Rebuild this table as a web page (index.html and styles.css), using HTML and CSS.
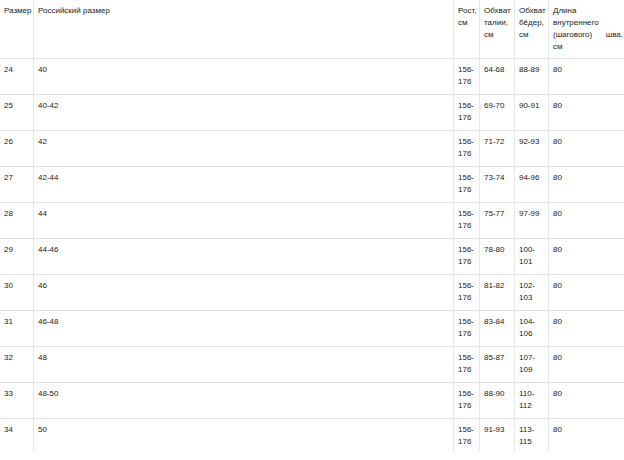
FILE: index.html
```html
<!DOCTYPE html>
<html lang="ru">
<head>
<meta charset="utf-8">
<title>Таблица размеров</title>
<link rel="stylesheet" href="styles.css">
</head>
<body>
<div class="frame">
<table class="sizes">
  <thead>
    <tr>
      <th class="c1">Размер</th>
      <th class="c2">Российский размер</th>
      <th class="c3">Рост, см</th>
      <th class="c4">Обхват талии, см</th>
      <th class="c5">Обхват бёдер, см</th>
      <th class="c6">Длина внутреннего (шагового) шва, см</th>
    </tr>
  </thead>
  <tbody>
    <tr><td>24</td><td>40</td><td>156-176</td><td>64-68</td><td>88-89</td><td>80</td></tr>
    <tr><td>25</td><td>40-42</td><td>156-176</td><td>69-70</td><td>90-91</td><td>80</td></tr>
    <tr><td>26</td><td>42</td><td>156-176</td><td>71-72</td><td>92-93</td><td>80</td></tr>
    <tr><td>27</td><td>42-44</td><td>156-176</td><td>73-74</td><td>94-96</td><td>80</td></tr>
    <tr><td>28</td><td>44</td><td>156-176</td><td>75-77</td><td>97-99</td><td>80</td></tr>
    <tr><td>29</td><td>44-46</td><td>156-176</td><td>78-80</td><td>100-101</td><td>80</td></tr>
    <tr><td>30</td><td>46</td><td>156-176</td><td>81-82</td><td>102-103</td><td>80</td></tr>
    <tr><td>31</td><td>46-48</td><td>156-176</td><td>83-84</td><td>104-106</td><td>80</td></tr>
    <tr><td>32</td><td>48</td><td>156-176</td><td>85-87</td><td>107-109</td><td>80</td></tr>
    <tr><td>33</td><td>48-50</td><td>156-176</td><td>88-90</td><td>110-112</td><td>80</td></tr>
    <tr><td>34</td><td>50</td><td>156-176</td><td>91-93</td><td>113-115</td><td>80</td></tr>
  </tbody>
</table>
</div>
</body>
</html>
```
FILE: styles.css
```css
html, body {
  margin: 0;
  padding: 0;
  background: #fff;
  overflow: hidden;
}
.frame {
  height: 452px;
  overflow: hidden;
}
.sizes {
  width: 624px;
  table-layout: fixed;
  border-collapse: separate;
  border-spacing: 0;
  font-family: "Liberation Sans", Arial, sans-serif;
  font-size: 8px;
  line-height: 12px;
  color: #222;
}
.sizes th,
.sizes td {
  box-sizing: border-box;
  padding: 5px 1px 6px 4px;
  text-align: justify;
  vertical-align: top;
  font-weight: normal;
  border-left: 1px solid #e8e8e8;
}
.sizes th {
  padding-bottom: 5px;
}
.sizes th:first-child,
.sizes td:first-child {
  border-left: none;
}
.sizes td {
  border-top: 1px solid #e3e3e3;
}
.c1 { width: 33px; }
.c2 { width: 420px; }
.c3 { width: 26px; }
.c4 { width: 35px; }
.c5 { width: 34px; }
.c6 { width: 76px; }
```
